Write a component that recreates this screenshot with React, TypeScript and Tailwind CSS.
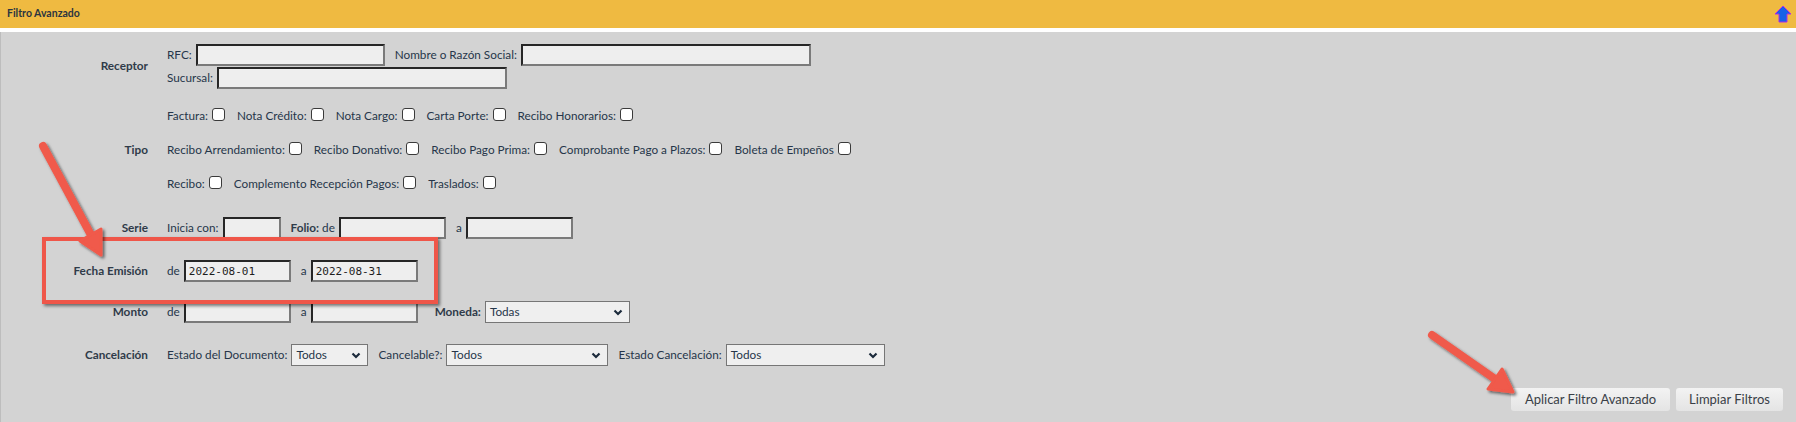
import React from 'react';

const inputCls =
  'h-[22px] border-2 border-t-[#262626] border-l-[#262626] border-r-[#7a7a7a] border-b-[#7a7a7a] bg-[#eeeeee] px-[3px] font-["DejaVu_Sans_Mono",monospace] text-[11px] text-[#1e1e1e] outline-none';

function Field({ w, value = '' }: { w: string; value?: string }) {
  return <input readOnly defaultValue={value} className={`${inputCls} ${w}`} />;
}

function Check({ label }: { label: string }) {
  return (
    <label className="flex items-center">
      <span>{label}</span>
      <input
        type="checkbox"
        className="mb-[3px] ml-[4px] h-[13px] w-[13px] appearance-none rounded-[3px] border border-[#3a3a3a] bg-white"
      />
    </label>
  );
}

function Select({ w, value }: { w: string; value: string }) {
  return (
    <div className={`flex h-[22px] items-center justify-between border border-[#767676] bg-[#efefef] pl-[4px] pr-[6px] ${w}`}>
      <span>{value}</span>
      <svg width="10" height="7" viewBox="0 0 10 7">
        <path d="M1.5 1.5 L5 5 L8.5 1.5" fill="none" stroke="#1b2a3b" strokeWidth="2.2" />
      </svg>
    </div>
  );
}

function Row({ label, className = '', children }: { label: string; className?: string; children: React.ReactNode }) {
  return (
    <div className={`flex items-center ${className}`}>
      <div className="w-[147px] text-right font-bold text-[#2f3b49]">{label}</div>
      <div className="pl-[19px]">{children}</div>
    </div>
  );
}

function UpArrow() {
  return (
    <svg width="18" height="18" viewBox="0 0 18 18">
      <polygon
        points="9,1 17,9 13,9 13,17 5,17 5,9 1,9"
        fill="#1762e6"
        stroke="#b12ae8"
        strokeWidth="1"
        strokeLinejoin="miter"
      />
    </svg>
  );
}

export default function App() {
  return (
    <div className="relative h-[422px] w-[1796px] overflow-hidden bg-white font-['Lato',sans-serif] text-[11.75px] text-[#26364a]">
      {/* header */}
      <div className="flex h-[28px] items-center justify-between bg-[#efba41] pl-[7px] pr-[4px]">
        <span className="text-[10.5px] font-bold text-[#2b3540]">Filtro Avanzado</span>
        <UpArrow />
      </div>
      <div className="h-[4px]" />

      {/* panel */}
      <div className="flex h-[390px] flex-col border-l border-[#bdbdbd] bg-[#d3d3d3] pt-[11px]">
        <Row label="Receptor">
          <div className="flex flex-col">
            <div className="flex h-[23px] items-center gap-[4px]">
              <span>RFC:</span>
              <Field w="w-[189px]" />
              <span className="ml-[6px]">Nombre o Razón Social:</span>
              <Field w="w-[290px]" />
            </div>
            <div className="flex h-[23px] items-center gap-[4px]">
              <span>Sucursal:</span>
              <Field w="w-[290px]" />
            </div>
          </div>
        </Row>

        <Row label="Tipo" className="mt-[15px]">
          <div className="flex flex-col gap-[10px]">
            <div className="flex h-[24px] items-center gap-[12px]">
              <Check label="Factura:" />
              <Check label="Nota Crédito:" />
              <Check label="Nota Cargo:" />
              <Check label="Carta Porte:" />
              <Check label="Recibo Honorarios:" />
            </div>
            <div className="flex h-[24px] items-center gap-[12px]">
              <Check label="Recibo Arrendamiento:" />
              <Check label="Recibo Donativo:" />
              <Check label="Recibo Pago Prima:" />
              <Check label="Comprobante Pago a Plazos:" />
              <Check label="Boleta de Empeños" />
            </div>
            <div className="flex h-[24px] items-center gap-[12px]">
              <Check label="Recibo:" />
              <Check label="Complemento Recepción Pagos:" />
              <Check label="Traslados:" />
            </div>
          </div>
        </Row>

        <Row label="Serie" className="mt-[20px] h-[24px]">
          <div className="flex items-center gap-[4px]">
            <span>Inicia con:</span>
            <Field w="w-[58px]" />
            <span className="ml-[6px]">
              <b className="text-[#2f3b49]">Folio:</b> de
            </span>
            <Field w="w-[107px]" />
            <span className="ml-[6px]">a</span>
            <Field w="w-[107px]" />
          </div>
        </Row>

        <Row label="Fecha Emisión" className="mt-[19px] h-[24px]">
          <div className="flex items-center gap-[4px]">
            <span>de</span>
            <Field w="w-[107px]" value="2022-08-01" />
            <span className="ml-[6px]">a</span>
            <Field w="w-[107px]" value="2022-08-31" />
          </div>
        </Row>

        <Row label="Monto" className="mt-[17px] h-[24px]">
          <div className="flex items-center gap-[4px]">
            <span>de</span>
            <Field w="w-[107px]" />
            <span className="ml-[6px]">a</span>
            <Field w="w-[107px]" />
            <span className="ml-[13px] font-bold text-[#2f3b49]">Moneda:</span>
            <Select w="w-[145px]" value="Todas" />
          </div>
        </Row>

        <Row label="Cancelación" className="mt-[19px] h-[24px]">
          <div className="flex items-center gap-[4px]">
            <span>Estado del Documento:</span>
            <Select w="w-[77px]" value="Todos" />
            <span className="ml-[6px]">Cancelable?:</span>
            <Select w="w-[162px]" value="Todos" />
            <span className="ml-[6px]">Estado Cancelación:</span>
            <Select w="w-[159px]" value="Todos" />
          </div>
        </Row>

        <div className="mt-[21px] flex justify-end gap-[6px] pr-[13px]">
          <button className="h-[23px] w-[159px] rounded-[3px] bg-gradient-to-b from-[#f3f3f3] to-[#e4e4e4] text-[13px] text-[#3a3f47]">
            Aplicar Filtro Avanzado
          </button>
          <button className="h-[23px] w-[107px] rounded-[3px] bg-gradient-to-b from-[#f3f3f3] to-[#e4e4e4] text-[13px] text-[#3a3f47]">
            Limpiar Filtros
          </button>
        </div>
      </div>

      {/* annotations */}
      <div className="pointer-events-none absolute left-[42px] top-[237px] h-[67px] w-[396px] border-4 border-[#ef5649] shadow-[2px_2px_3px_rgba(0,0,0,0.5)]" />
      <svg className="pointer-events-none absolute left-0 top-0" width="1796" height="422">
        <defs>
          <filter id="sh" x="-30%" y="-30%" width="160%" height="160%">
            <feDropShadow dx="2" dy="2" stdDeviation="1.5" floodColor="#000" floodOpacity="0.55" />
          </filter>
        </defs>
        <g filter="url(#sh)" fill="#f05a4b" stroke="#f05a4b" strokeLinejoin="round" strokeLinecap="round">
          <line x1="43" y1="146" x2="91" y2="235" strokeWidth="8" />
          <polygon points="101,255 80,241 101,229" strokeWidth="3" />
          <line x1="1432" y1="335" x2="1495" y2="379" strokeWidth="8" />
          <polygon points="1513,392 1488,389 1502,369" strokeWidth="3" />
        </g>
      </svg>
    </div>
  );
}
